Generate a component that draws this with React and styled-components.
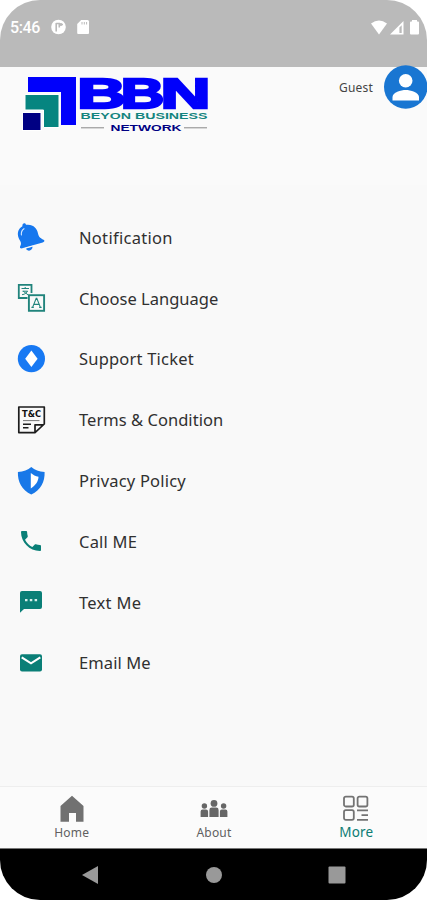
import styled, { createGlobalStyle } from "styled-components";

const GlobalStyle = createGlobalStyle`
  * {
    box-sizing: border-box;
  }
  body {
    margin: 0;
    background: white;
    font-family: "Noto Sans", "Open Sans", sans-serif;
  }
  svg {
    display: block;
    flex-shrink: 0;
    overflow: visible;
  }
`;

const Phone = styled.div`
  width: 427px;
  height: 900px;
  display: flex;
  flex-direction: column;
  overflow: hidden;
  border-radius: 40px;
  background: #fafafa;
`;

const StatusBar = styled.div`
  height: 67px;
  flex-shrink: 0;
  padding: 17px 7px 0 10px;
  display: flex;
  justify-content: space-between;
  align-items: flex-start;
  background: #bababa;
`;

const StatusGroup = styled.div`
  height: 20px;
  display: flex;
  align-items: center;
  gap: ${(props) => props.$gap}px;
`;

const Clock = styled.span`
  width: 29px;
  font-family: Roboto, sans-serif;
  font-size: 16px;
  font-weight: 500;
  letter-spacing: -0.4px;
  white-space: nowrap;
  color: white;
`;

const Header = styled.div`
  height: 118px;
  flex-shrink: 0;
  padding-left: 20px;
  display: flex;
  justify-content: space-between;
  align-items: flex-start;
`;

const LogoBox = styled.div`
  padding-top: 6px;
`;

const User = styled.div`
  margin-top: -2px;
  display: flex;
  align-items: center;
  gap: 11px;
`;

const UserName = styled.span`
  font-size: 12px;
  letter-spacing: 0.2px;
  color: #444;
`;

const Menu = styled.div`
  flex: 1;
  padding: 22px 0 0 17px;
  background: #f9f9f9;
`;

const MenuItem = styled.div`
  height: 60.8px;
  display: flex;
  align-items: center;
`;

const IconBox = styled.div`
  width: 62px;
`;

const Label = styled.span`
  padding-top: 1px;
  font-size: 16.5px;
  line-height: 24px;
  letter-spacing: ${(props) => props.$spacing}px;
  white-space: nowrap;
  color: #303030;
`;

const TabBar = styled.div`
  height: 62px;
  flex-shrink: 0;
  display: grid;
  grid-template-columns: repeat(3, 1fr);
  border-top: 1px solid #eeeeee;
  background: #fbfbfb;
`;

const Tab = styled.div`
  padding: 8px 0 0 1px;
  display: flex;
  flex-direction: column;
  align-items: center;
`;

const TabText = styled.span`
  margin-top: ${(props) => (props.$active ? 0 : 1)}px;
  font-size: ${(props) => (props.$active ? 13.5 : 12)}px;
  line-height: 18px;
  letter-spacing: 0.2px;
  color: ${(props) => (props.$active ? "#0c7c74" : "#606060")};
`;

const SystemBar = styled.div`
  height: 52px;
  flex-shrink: 0;
  display: grid;
  grid-template-columns: 179px 69px 177px;
  align-items: center;
  justify-items: center;
  border-top: 1px solid #777;
  background: black;
`;

const Logo = () => (
  <svg width="190" height="62" viewBox="20 73 190 62">
    <path d="M28 77H76V125H61V92H28Z" fill="#0000fb" />
    <path d="M25 94.5H59V127.5H43.5V110H25Z" fill="#068580" stroke="white" strokeWidth="1" />
    <rect x="22.5" y="112.5" width="18.5" height="18" fill="#000083" stroke="white" strokeWidth="1" />
    <g
      fontFamily="Liberation Sans, sans-serif"
      fontWeight="bold"
      fontSize="43"
      fill="#0000fb"
      stroke="#0000fb"
      strokeWidth="2.4"
    >
      <text x="77.3" y="107.5" textLength="48.5" lengthAdjust="spacingAndGlyphs">B</text>
      <text x="120.7" y="107.5" textLength="43.5" lengthAdjust="spacingAndGlyphs">B</text>
      <text x="160.5" y="107.5" textLength="50" lengthAdjust="spacingAndGlyphs">N</text>
    </g>
    <g fontFamily="Liberation Sans, sans-serif" fontWeight="bold">
      <text x="80.5" y="119" fontSize="9.3" fill="#14857f" textLength="127" lengthAdjust="spacingAndGlyphs">
        BEYON BUSINESS
      </text>
      <text x="110.5" y="130.5" fontSize="9.6" fill="#000083" textLength="71" lengthAdjust="spacingAndGlyphs">
        NETWORK
      </text>
    </g>
    <path d="M81 127.8H104M184 127.8H207" stroke="#888" strokeWidth="1" />
  </svg>
);

const Avatar = () => (
  <svg width="43" height="44" viewBox="0 0 43 44">
    <circle cx="21.7" cy="22" r="21.7" fill="#1976d2" />
    <circle cx="21.7" cy="15.8" r="6.8" fill="white" />
    <path d="M8.5 35.5V32C8.5 27.5 17 25 21.7 25S35 27.5 35 32V35.5Z" fill="white" />
  </svg>
);

const BellIcon = () => (
  <svg width="28" height="28" viewBox="0 0 28 28">
    <path
      d="M5.4 3.3C5 .2 8.2-.8 9 1.8C16 .7 20.2 5.4 21 10.4C21.7 14.4 24.3 15.3 27 17.1C28 18.2 27 19.2 25.7 19.6L5.2 25.3C3.5 25.8 2.3 24.6 3.3 22.9C5.4 19 2.4 17.8 1.3 13.9C.1 9.7 1.4 5.6 5.4 3.3Z"
      fill="#1677ee"
    />
    <path d="M8.9 25.5L15.6 23.6C15.5 28.4 10.2 28.8 8.9 25.5Z" fill="#1677ee" />
    <path d="M4.4 12C4 9 5 7 7 5.7" fill="none" stroke="#d5e8ff" strokeWidth="1.1" strokeLinecap="round" />
    <path d="M8.4 25.2L16 23.1" stroke="#f9f9f9" strokeWidth=".7" />
  </svg>
);

const LanguageIcon = () => (
  <svg width="28" height="28" viewBox="0 0 28 28" fill="none" stroke="#21847c">
    <path d="M10.5 14H1.8V.9H14.5V9" strokeWidth="1.8" />
    <path d="M4.5 4.5H12M8.2 3V4.5M5.5 7.2H10.7M5 10.7C8 10.5 10 8.5 10.5 7M6.2 7.2L11 10.8" strokeWidth="1" />
    <rect x="11.9" y="11.2" width="15.2" height="15.6" strokeWidth="1.9" />
    <path d="M15.6 23.4L19.2 14.4H19.8L23.4 23.4M16.8 20.4H22.2M14.4 23.4H16.8M22.2 23.4H24.6" strokeWidth="1.1" />
  </svg>
);

const TicketIcon = () => (
  <svg width="28" height="28" viewBox="0 0 28 28">
    <circle cx="14.4" cy="13.7" r="13.6" fill="#1879f3" />
    <path d="M14.4 5.5L20.6 13.7L14.4 21.9L8.2 13.7Z" fill="white" />
  </svg>
);

const TermsIcon = () => (
  <svg width="29" height="28" viewBox="0 0 29 28" fill="none" stroke="#1d1d1d">
    <path d="M17.5 26.6H1.8V1H27.3V18L18 26.6V18.8H26.5" strokeWidth="1.7" strokeLinejoin="round" />
    <text
      x="5"
      y="10.6"
      fill="#111"
      stroke="none"
      fontFamily="DejaVu Sans, sans-serif"
      fontWeight="bold"
      fontSize="8.5"
      textLength="19"
      lengthAdjust="spacingAndGlyphs"
    >
      T&amp;C
    </text>
    <path d="M6 14.6H22.5" stroke="#777" strokeWidth="1" />
    <path d="M6 18.2H14M6 21.7H11.5" strokeWidth="1.4" />
  </svg>
);

const PrivacyIcon = () => (
  <svg width="28" height="28" viewBox="0 0 28 28">
    <path
      d="M14.3 0C17.7 3.1 22 4.9 27.6 4.9C28 14.6 23.8 23 14.3 27.4C4.8 23 .5 14.6 .9 4.9C6.5 4.9 10.9 3.1 14.3 0Z"
      fill="#1878e8"
    />
    <path d="M13.8 6C16.2 8 18.5 9.2 21.5 9.8C21.4 14.4 18.6 18.5 13.8 21.4Z" fill="white" />
  </svg>
);

const CallIcon = () => (
  <svg width="28" height="28" viewBox="-.6 -.6 25.2 25.2" fill="#0a7f77">
    <path d="M6.62 10.79c1.44 2.83 3.76 5.14 6.59 6.59l2.2-2.2c.27-.27.67-.36 1.02-.24 1.12.37 2.33.57 3.57.57.55 0 1 .45 1 1V20c0 .55-.45 1-1 1-9.39 0-17-7.61-17-17 0-.55.45-1 1-1h3.5c.55 0 1 .45 1 1 0 1.25.2 2.45.57 3.57.11.35.03.74-.25 1.02l-2.2 2.2z" />
  </svg>
);

const TextIcon = () => (
  <svg width="28" height="28" viewBox="0 0 28 28">
    <path d="M5 3H23Q25 3 25 5V19Q25 21 23 21H7L3 24.8V5Q3 3 5 3Z" fill="#0a7f77" />
    <path d="M8 11H10.5V13.3H8ZM12.8 11H15.3V13.3H12.8ZM17.6 11H20.1V13.3H17.6Z" fill="#d7efec" />
  </svg>
);

const EmailIcon = () => (
  <svg width="28" height="28" viewBox="0 0 28 28">
    <rect x="3" y="5.3" width="22" height="17.2" rx="2" fill="#0a7f77" />
    <path d="M4.7 8.3L14 14.3L23.3 8.3" fill="none" stroke="white" strokeWidth="2.1" />
  </svg>
);

const HomeIcon = () => (
  <svg width="26" height="28" viewBox="0 0 26 28">
    <path d="M13 .8L24.5 11V26.8H17V18H10V26.8H1.5V11Z" fill="#717171" />
  </svg>
);

const AboutIcon = () => (
  <svg width="28" height="28" viewBox="0 0 28 28" fill="#666">
    <circle cx="14" cy="8.4" r="3.4" />
    <circle cx="4.4" cy="11" r="2.7" />
    <circle cx="23.6" cy="11" r="2.7" />
    <path d="M9.4 22V15Q9.4 12.6 11.8 12.6H16.2Q18.6 12.6 18.6 15V22Z" />
    <path d="M.6 22V16.6Q.6 14.6 2.6 14.6H6Q8.1 14.6 8.1 16.6V22ZM19.9 22V16.6Q19.9 14.6 21.9 14.6H25.4Q27.4 14.6 27.4 16.6V22Z" />
  </svg>
);

const MoreIcon = () => (
  <svg width="28" height="28" viewBox="0 0 28 28" fill="none" stroke="#737373" strokeWidth="1.8">
    <rect x="2" y="1.7" width="9.8" height="9.8" rx="1.8" />
    <rect x="15.6" y="1.7" width="9.8" height="9.8" rx="1.8" />
    <rect x="2" y="15.1" width="9.8" height="9.8" rx="1.8" />
    <path d="M15 15.4H26M19.5 20.1H26M15 24.9H26" />
  </svg>
);

const menuItems = [
  { text: "Notification", icon: <BellIcon />, spacing: 0.3 },
  { text: "Choose Language", icon: <LanguageIcon />, spacing: 0 },
  { text: "Support Ticket", icon: <TicketIcon />, spacing: 0.2 },
  { text: "Terms & Condition", icon: <TermsIcon />, spacing: 0.04 },
  { text: "Privacy Policy", icon: <PrivacyIcon />, spacing: 0.2 },
  { text: "Call ME", icon: <CallIcon />, spacing: 0.2 },
  { text: "Text Me", icon: <TextIcon />, spacing: 0.3 },
  { text: "Email Me", icon: <EmailIcon />, spacing: 0.1 },
];

const tabs = [
  { text: "Home", icon: <HomeIcon /> },
  { text: "About", icon: <AboutIcon /> },
  { text: "More", icon: <MoreIcon />, active: true },
];

const App = () => {
  return (
    <>
      <GlobalStyle />
      <Phone>
        <StatusBar>
          <StatusGroup $gap={12}>
            <Clock>5:46</Clock>
            <svg width="15" height="16" viewBox="0 0 15 16">
              <circle cx="7.5" cy="8" r="7.3" fill="white" />
              <path d="M5.2 4V12.5M5.2 4.5H8.3V8.5M10 4V7M8.8 5.5H12" fill="none" stroke="#bababa" strokeWidth="1.6" />
            </svg>
            <svg width="12" height="16" viewBox="1 0 12 16">
              <path d="M4.2 1H10.5Q12 1 12 2.5V14Q12 15 11 15H1.2Q.2 15 .2 14V5Z" fill="white" />
              <path d="M5 3V5.5M7.3 3V5.5M9.6 3V5.5" stroke="#bababa" strokeWidth="1" />
            </svg>
          </StatusGroup>
          <StatusGroup $gap={2}>
            <svg width="16" height="15" viewBox="0 0 16 15">
              <path d="M0 3.5Q8-2.5 16 3.5L8 14.5Z" fill="white" />
            </svg>
            <svg width="15" height="15" viewBox="0 0 15 15">
              <path d="M1 14.5L14.5 1V14.5Z" fill="white" />
              <path d="M10.4 7.5L12.7 5.2V13H10.4Z" fill="#bababa" />
            </svg>
            <svg width="14" height="15" viewBox="0 0 14 15">
              <path d="M6 0H11V1.5H12Q13 1.5 13 2.5V13.5Q13 14.5 12 14.5H5Q4 14.5 4 13.5V2.5Q4 1.5 5 1.5H6Z" fill="white" />
            </svg>
          </StatusGroup>
        </StatusBar>
        <Header>
          <LogoBox>
            <Logo />
          </LogoBox>
          <User>
            <UserName>Guest</UserName>
            <Avatar />
          </User>
        </Header>
        <Menu>
          {menuItems.map((item) => (
            <MenuItem key={item.text}>
              <IconBox>{item.icon}</IconBox>
              <Label $spacing={item.spacing}>{item.text}</Label>
            </MenuItem>
          ))}
        </Menu>
        <TabBar>
          {tabs.map((tab) => (
            <Tab key={tab.text}>
              {tab.icon}
              <TabText $active={tab.active}>{tab.text}</TabText>
            </Tab>
          ))}
        </TabBar>
        <SystemBar>
          <svg width="18" height="20" viewBox="0 0 18 20">
            <path d="M17 1V19L1 10Z" fill="#999" />
          </svg>
          <svg width="18" height="18" viewBox="0 0 18 18">
            <circle cx="9" cy="9" r="8" fill="#999" />
          </svg>
          <svg width="18" height="18" viewBox="0 0 18 18">
            <rect x=".5" y=".5" width="17" height="17" rx="1" fill="#999" />
          </svg>
        </SystemBar>
      </Phone>
    </>
  );
};

export default App;
